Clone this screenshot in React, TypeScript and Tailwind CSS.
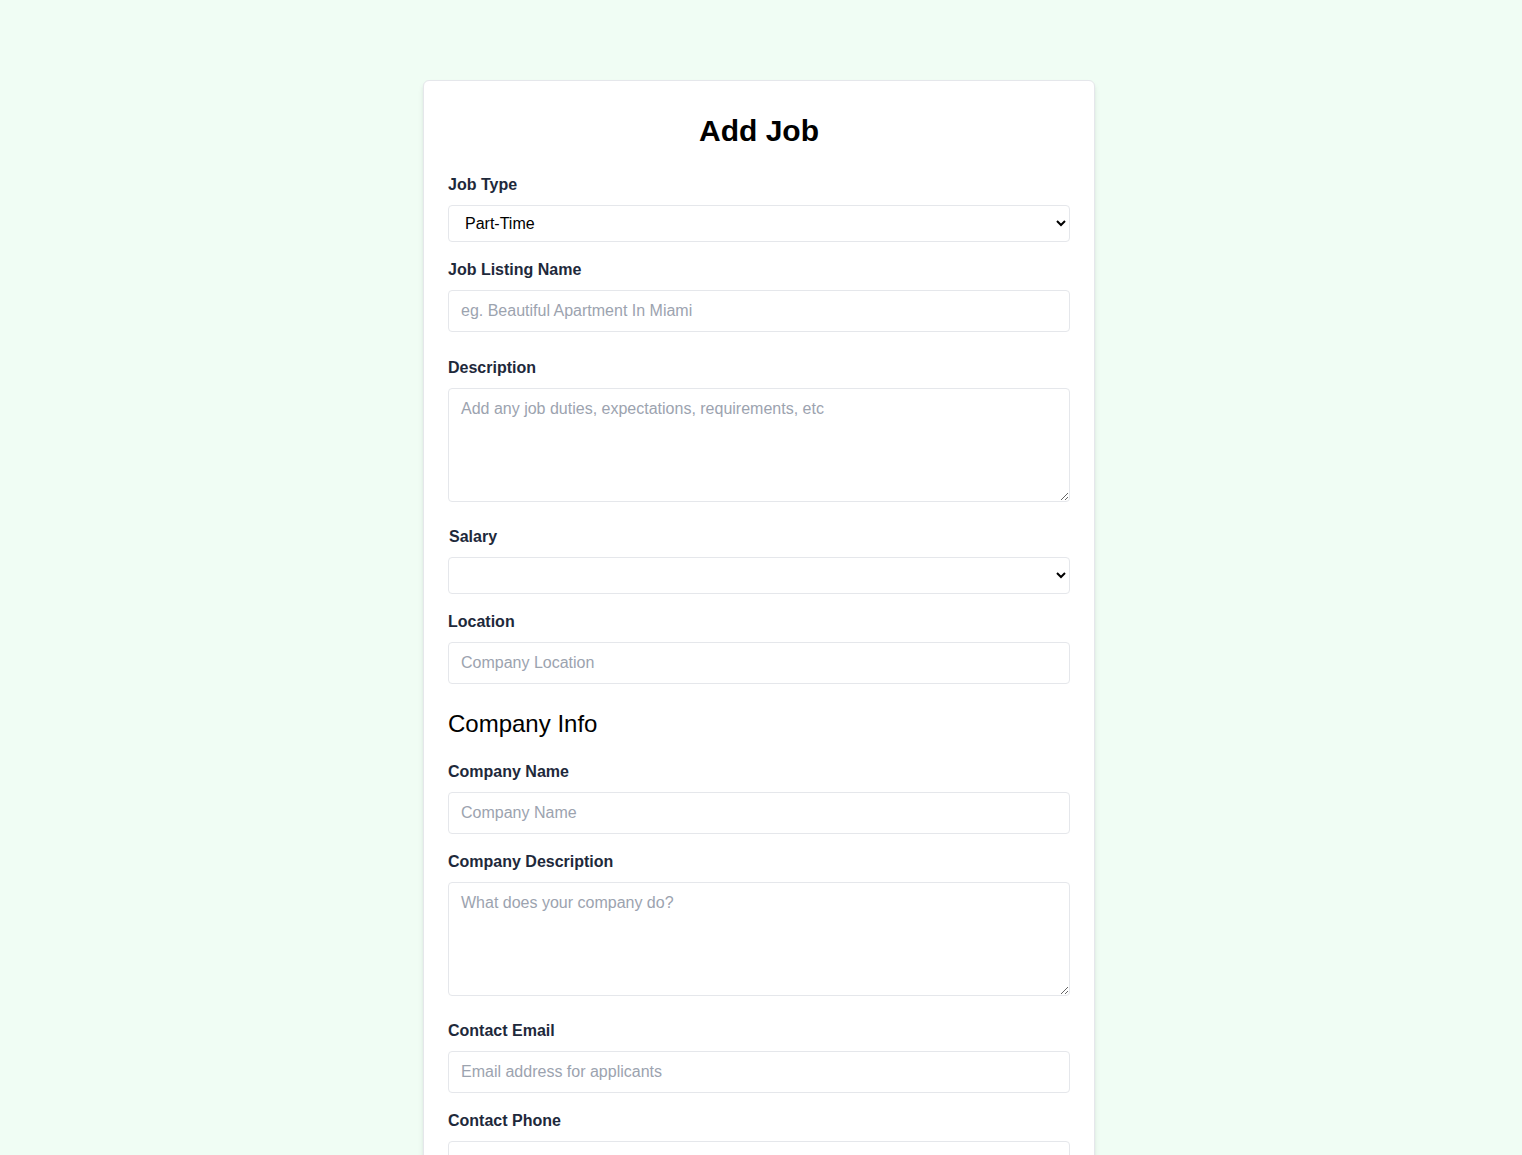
import React from "react";

const labelCls = "block text-[#1e293b] font-bold text-base leading-6 mb-2";
const inputCls =
  "block w-full border border-[#e5e7eb] rounded py-2 px-3 text-base leading-6 text-black placeholder:text-[#9ca3af] bg-white outline-none";
const selectCls =
  "block w-full border border-[#e5e7eb] rounded py-2 px-3 text-base bg-white text-black h-[37px]";

export default function App() {
  return (
    <div
      className="min-h-screen bg-[#f0fdf4] pr-[4px]"
      style={{ fontFamily: '"Liberation Sans", Arial, sans-serif' }}
    >
      <div className="mx-auto w-[672px] pt-20 pb-24">
        <div className="bg-white px-6 py-8 rounded-md border border-[#e5e7eb] shadow-md">
          <h2 className="text-3xl leading-9 font-bold text-center text-black mb-6">Add Job</h2>

          <div className="mb-4">
            <label className={labelCls}>Job Type</label>
            <select className={selectCls} defaultValue="Part-Time">
              <option>Full-Time</option>
              <option>Part-Time</option>
              <option>Remote</option>
              <option>Internship</option>
            </select>
          </div>

          <div className="mb-6">
            <label className={labelCls}>Job Listing Name</label>
            <input className={inputCls} placeholder="eg. Beautiful Apartment In Miami" />
          </div>

          <div className="mb-[23px]">
            <label className={labelCls}>Description</label>
            <textarea
              rows={4}
              className={inputCls}
              placeholder="Add any job duties, expectations, requirements, etc"
            />
          </div>

          <div className="mb-4">
            <label className={labelCls + " pl-px"}>Salary</label>
            <select className={selectCls} defaultValue="">
              <option value=""></option>
              <option>Under $50K</option>
              <option>$50K - $60K</option>
            </select>
          </div>

          <div className="mb-6">
            <label className={labelCls}>Location</label>
            <input className={inputCls} placeholder="Company Location" />
          </div>

          <h3 className="text-2xl leading-8 text-black mb-5">Company Info</h3>

          <div className="mb-4">
            <label className={labelCls}>Company Name</label>
            <input className={inputCls} placeholder="Company Name" />
          </div>

          <div className="mb-[23px]">
            <label className={labelCls}>Company Description</label>
            <textarea rows={4} className={inputCls} placeholder="What does your company do?" />
          </div>

          <div className="mb-4">
            <label className={labelCls}>Contact Email</label>
            <input className={inputCls} placeholder="Email address for applicants" />
          </div>

          <div className="mb-4">
            <label className={labelCls}>Contact Phone</label>
            <input className={inputCls} placeholder="Optional phone for applicants" />
          </div>

          <div>
            <button className="bg-[#4f46e5] text-white font-bold py-2 px-4 rounded-full w-full">
              Add Job
            </button>
          </div>
        </div>
      </div>
    </div>
  );
}
